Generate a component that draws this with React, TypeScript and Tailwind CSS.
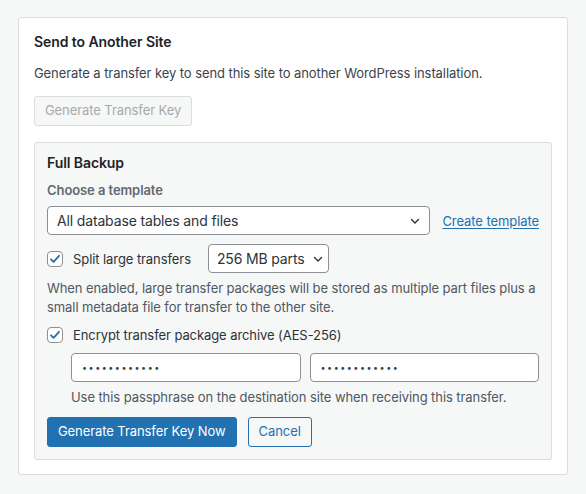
import { useState } from "react"

const font = { fontFamily: "Inter, 'Noto Sans', sans-serif" }

function Chevron() {
  return (
    <svg width="12" height="12" viewBox="0 0 12 12" fill="none" className="pointer-events-none">
      <path d="M2.5 4.5L6 8l3.5-3.5" stroke="#2c3338" strokeWidth="1.4" strokeLinecap="round" strokeLinejoin="round" />
    </svg>
  )
}

function Checkbox({ checked, onChange }: { checked: boolean; onChange: () => void }) {
  return (
    <button
      type="button"
      onClick={onChange}
      className="w-4 h-4 shrink-0 rounded-[4px] border border-[#8c8f94] bg-white flex items-center justify-center"
    >
      {checked && (
        <svg width="14" height="14" viewBox="0 0 14 14" fill="none">
          <path d="M3 7.3l2.6 2.6L11 3.8" stroke="#2271b1" strokeWidth="1.8" strokeLinecap="round" strokeLinejoin="round" />
        </svg>
      )}
    </button>
  )
}

export default function App() {
  const [split, setSplit] = useState(true)
  const [encrypt, setEncrypt] = useState(true)

  return (
    <div
      className="min-h-[494px] bg-[#f6f7f7] px-[18px] pt-[17px] text-[13px] tracking-[-0.08px] text-[#1d2327]"
      style={font}
    >
      <div className="bg-white border border-[#dcdcde] rounded-[3px] px-[15px] pt-[14px] pb-[14px]">
        <h2 className="text-[14px] leading-5 font-semibold text-[#1d2327]">Send to Another Site</h2>
        <p className="mt-[11px] leading-5 text-[#3c434a]">
          Generate a transfer key to send this site to another WordPress installation.
        </p>
        <div className="mt-[13px] flex">
          <button
            type="button"
            disabled
            className="h-[30px] px-[10px] whitespace-nowrap rounded-[3px] border border-[#dcdcde] bg-[#f6f7f7] text-[#a7aaad]"
          >
            Generate Transfer Key
          </button>
        </div>

        <div className="mt-4 bg-[#f6f7f7] border border-[#dcdcde] rounded-[3px] px-3 pt-[10px] pb-3">
          <h3 className="text-[14px] leading-5 font-semibold">Full Backup</h3>
          <div className="mt-[7px] leading-5 font-semibold text-[#646970]">Choose a template</div>

          <div className="mt-[6px] flex items-center gap-3">
            <div className="relative flex-1">
              <select className="w-full h-[29px] appearance-none rounded-[4px] border border-[#8c8f94] bg-white pl-[9px] pr-8 text-[14px] tracking-[-0.15px] text-[#2c3338] outline-none">
                <option>All database tables and files</option>
              </select>
              <span className="absolute right-[9px] top-[9px]">
                <Chevron />
              </span>
            </div>
            <a href="#" className="text-[#2271b1] underline underline-offset-2 leading-5">
              Create template
            </a>
          </div>

          <div className="mt-[9px] flex items-center">
            <Checkbox checked={split} onChange={() => setSplit(!split)} />
            <span className="ml-[10px] leading-5 text-[#2c3338]">Split large transfers</span>
            <div className="relative ml-[17px]">
              <select className="w-[121px] h-[29px] appearance-none rounded-[4px] border border-[#8c8f94] bg-white pl-[8px] pr-5 text-[14px] tracking-[-0.15px] text-[#2c3338] outline-none">
                <option>256 MB parts</option>
              </select>
              <span className="absolute right-[5px] top-[9px]">
                <Chevron />
              </span>
            </div>
          </div>

          <p className="mt-[6px] leading-[19px] text-[#50575e]">
            When enabled, large transfer packages will be stored as multiple part files plus a small metadata file for
            transfer to the other site.
          </p>

          <div className="mt-2 flex items-center">
            <Checkbox checked={encrypt} onChange={() => setEncrypt(!encrypt)} />
            <span className="ml-[10px] leading-5 text-[#2c3338]">Encrypt transfer package archive (AES-256)</span>
          </div>

          <div className="pl-6">
            <div className="mt-2 grid grid-cols-2 gap-[9px]">
              <input
                type="password"
                readOnly
                value="passphrase12"
                className="h-[29px] rounded-[4px] border border-[#8c8f94] bg-white px-[10px] text-[9px] tracking-[1.5px] text-[#3c434a] outline-none"
              />
              <input
                type="password"
                readOnly
                value="passphrase12"
                className="h-[29px] rounded-[4px] border border-[#8c8f94] bg-white px-[10px] text-[9px] tracking-[1.5px] text-[#3c434a] outline-none"
              />
            </div>
            <p className="mt-[5px] leading-5 text-[#50575e]">
              Use this passphrase on the destination site when receiving this transfer.
            </p>
          </div>

          <div className="mt-[10px] flex items-center gap-[11px]">
            <button
              type="button"
              className="h-[30px] px-[10px] rounded-[3px] bg-[#2271b1] border border-[#2271b1] text-white"
            >
              Generate Transfer Key Now
            </button>
            <button
              type="button"
              className="h-[30px] px-[10px] rounded-[3px] bg-[#f6f7f7] border border-[#2271b1] text-[#2271b1]"
            >
              Cancel
            </button>
          </div>
        </div>
      </div>
    </div>
  )
}
